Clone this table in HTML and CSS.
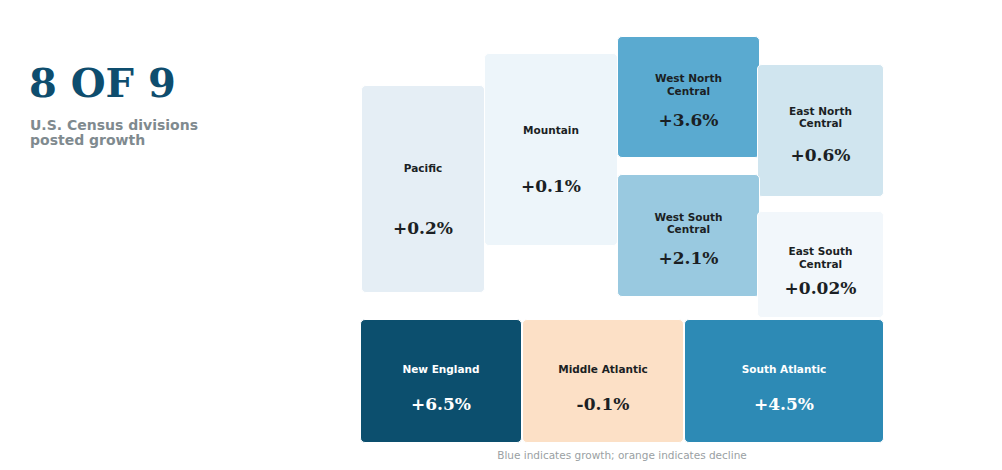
FILE: index.html
```html
<!DOCTYPE html>
<html lang="en">
<head>
<meta charset="utf-8">
<title>8 of 9 U.S. Census divisions posted growth</title>
<link rel="stylesheet" href="styles.css">
</head>
<body>
<main class="page">
  <section class="intro">
    <h1 class="headline">8 OF 9</h1>
    <p class="subtitle">U.S. Census divisions<br>posted growth</p>
  </section>
  <section class="map-column">
    <div class="map-upper">
      <div class="tile t-pacific"><span class="label">Pacific</span><span class="value">+0.2%</span></div>
      <div class="tile t-mountain"><span class="label">Mountain</span><span class="value">+0.1%</span></div>
      <div class="tile t-wnc"><span class="label">West North<br>Central</span><span class="value">+3.6%</span></div>
      <div class="tile t-enc"><span class="label">East North<br>Central</span><span class="value">+0.6%</span></div>
      <div class="tile t-wsc"><span class="label">West South<br>Central</span><span class="value">+2.1%</span></div>
      <div class="tile t-esc"><span class="label">East South<br>Central</span><span class="value">+0.02%</span></div>
    </div>
    <div class="map-lower">
      <div class="tile t-ne dark"><span class="label">New England</span><span class="value">+6.5%</span></div>
      <div class="tile t-ma"><span class="label">Middle Atlantic</span><span class="value">-0.1%</span></div>
      <div class="tile t-sa dark"><span class="label">South Atlantic</span><span class="value">+4.5%</span></div>
    </div>
    <p class="caption">Blue indicates growth; orange indicates decline</p>
  </section>
</main>
</body>
</html>
```

FILE: styles.css
```css
html, body {
  margin: 0;
  padding: 0;
  background: #ffffff;
}

.page {
  display: flex;
  width: 1002px;
  height: 470px;
  font-family: "DejaVu Sans", "Liberation Sans", sans-serif;
}

.intro {
  width: 360px;
  flex: none;
  padding: 63px 0 0 29px;
  box-sizing: border-box;
}

.headline {
  margin: 0 0 15px;
  font-family: "DejaVu Serif", "Liberation Serif", serif;
  font-weight: bold;
  font-size: 40px;
  line-height: 40px;
  color: #0e4d6e;
}

.subtitle {
  margin: 0 0 0 1px;
  font-weight: bold;
  font-size: 14px;
  line-height: 15px;
  color: #7f8a8f;
}

.map-column {
  width: 524px;
  flex: none;
  padding-top: 35px;
  display: flex;
  flex-direction: column;
}

.map-upper {
  position: relative;
  height: 284px;
}

.map-lower {
  display: flex;
  height: 124px;
}

.tile {
  box-sizing: border-box;
  border: 1px solid #ffffff;
  border-radius: 5px;
  display: grid;
  grid-template-rows: minmax(0, 30fr) minmax(0, 20fr) minmax(0, 10fr) minmax(0, 18fr) minmax(0, 22fr);
  justify-items: center;
  color: #1b1f24;
  text-align: center;
}

.map-upper .tile {
  position: absolute;
}

.label {
  grid-row: 2;
  align-self: center;
  font-weight: bold;
  font-size: 10.5px;
  line-height: 1.2;
}

.value {
  grid-row: 4;
  align-self: center;
  font-family: "DejaVu Serif", "Liberation Serif", serif;
  font-weight: bold;
  font-size: 17px;
  line-height: 1.2;
}

.dark {
  color: #ffffff;
}

.t-pacific { left: 1px; top: 50px; width: 124px; height: 208px; background: #e5eef5; }
.t-mountain { left: 124px; top: 18px; width: 134px; height: 193px; background: #edf5fa; }
.t-wnc { left: 257px; top: 1px; width: 143px; height: 122px; background: #5aaad0; }
.t-enc { left: 397px; top: 29px; width: 127px; height: 133px; background: #d0e5ef; }
.t-wsc { left: 257px; top: 139px; width: 143px; height: 123px; background: #99c9e0; }
.t-esc {
  left: 397px; top: 176px; width: 127px; height: 107px; background: #f2f7fb;
  grid-template-rows: minmax(0, 33fr) minmax(0, 27fr) minmax(0, 6fr) minmax(0, 24fr) minmax(0, 17fr);
}

.t-ne { width: 162px; background: #0c4f6e; }
.t-ma { width: 162px; background: #fce0c6; }
.t-sa { width: 200px; background: #2d8ab5; }

.caption {
  margin: 6px 0 0;
  text-align: center;
  font-size: 10.5px;
  line-height: 13px;
  color: #9a9fa3;
}
```
